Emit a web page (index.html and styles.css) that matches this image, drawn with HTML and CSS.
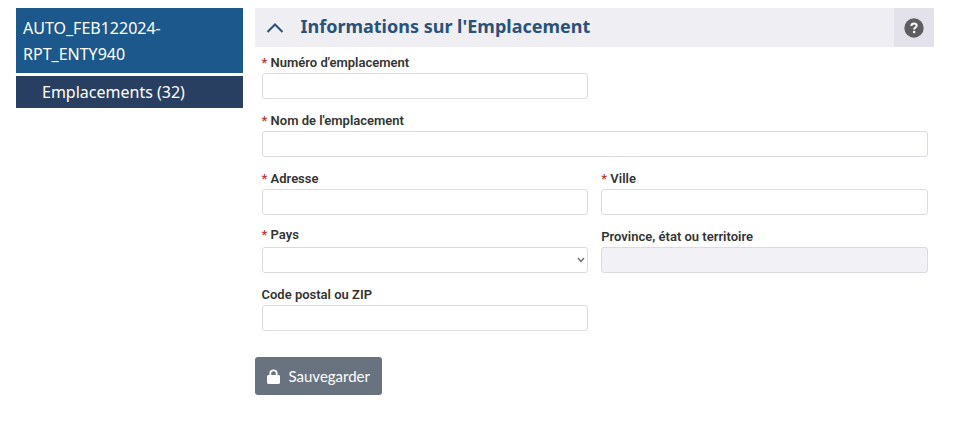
FILE: index.html
```
<!DOCTYPE html>
<html lang="fr">
<head>
    <meta charset="UTF-8">
    <meta name="viewport" content="width=device-width, initial-scale=1.0">
    <title>Informations sur l'Emplacement</title>
    <link rel="stylesheet" href="styles.css">
</head>
<body>
    <div class="page">
        <nav class="sidebar">
            <a href="#" class="sidebar-entity">AUTO_FEB122024-RPT_ENTY940</a>
            <a href="#" class="sidebar-item">Emplacements (32)</a>
        </nav>
        <main class="content">
            <div class="panel-header">
                <button type="button" class="toggle-btn" aria-label="Réduire">
                    <svg width="18" height="12" viewBox="0 0 18 12"><path d="M1.5 10 L9 2.5 L16.5 10" fill="none" stroke="currentColor" stroke-width="2"/></svg>
                </button>
                <h1>Informations sur l'Emplacement</h1>
                <button type="button" class="help-btn" aria-label="Aide">
                    <svg width="20" height="20" viewBox="0 0 20 20">
                        <circle cx="10" cy="10" r="9.7" fill="#5e5e60"/>
                        <path d="M7.3 8 C7.6 4.6 12.8 4.9 12.7 7.8 C12.6 9.6 10.1 9.5 10.1 11.5" fill="none" stroke="#fff" stroke-width="2"/>
                        <circle cx="10.1" cy="14" r="1.3" fill="#fff"/>
                    </svg>
                </button>
            </div>
            <form class="location-form" action="#" method="post">
                <div class="form-row">
                    <div class="form-group">
                        <label for="numero"><span class="required">*</span> Numéro d'emplacement</label>
                        <input type="text" id="numero" name="numero" required>
                    </div>
                </div>
                <div class="form-row">
                    <div class="form-group form-group-wide">
                        <label for="nom"><span class="required">*</span> Nom de l'emplacement</label>
                        <input type="text" id="nom" name="nom" required>
                    </div>
                </div>
                <div class="form-row form-row-address">
                    <div class="form-group">
                        <label for="adresse"><span class="required">*</span> Adresse</label>
                        <input type="text" id="adresse" name="adresse" required>
                    </div>
                    <div class="form-group">
                        <label for="ville"><span class="required">*</span> Ville</label>
                        <input type="text" id="ville" name="ville" required>
                    </div>
                </div>
                <div class="form-row">
                    <div class="form-group form-group-select">
                        <label for="pays"><span class="required">*</span> Pays</label>
                        <div class="select-wrap">
                            <select id="pays" name="pays" required>
                                <option value="" selected></option>
                                <option value="CA">Canada</option>
                                <option value="US">États-Unis</option>
                            </select>
                            <svg class="select-arrow" width="8" height="6" viewBox="0 0 8 6"><path d="M1 1 L4 4.5 L7 1" fill="none" stroke="#666" stroke-width="1.3"/></svg>
                        </div>
                    </div>
                    <div class="form-group">
                        <label for="province">Province, état ou territoire</label>
                        <input type="text" id="province" name="province" disabled>
                    </div>
                </div>
                <div class="form-row">
                    <div class="form-group">
                        <label for="code_postal">Code postal ou ZIP</label>
                        <input type="text" id="code_postal" name="code_postal">
                    </div>
                </div>
                <button type="submit" class="save-btn">
                    <svg width="13" height="15" viewBox="0 0 13 15">
                        <path d="M3.3 7 V4.5 a3.2 3.2 0 0 1 6.4 0 V7" fill="none" stroke="#fff" stroke-width="1.8"/>
                        <rect x="0" y="6" width="13" height="9" rx="1.4" fill="#fff"/>
                    </svg>
                    Sauvegarder
                </button>
            </form>
        </main>
    </div>
</body>
</html>
```
FILE: styles.css
```
* {
    margin: 0;
    padding: 0;
    box-sizing: border-box;
}

body {
    background: #fff;
    font-family: 'Roboto', sans-serif;
    color: #333;
}

.page {
    display: grid;
    grid-template-columns: 1fr 3fr;
    gap: 12px;
    align-items: start;
    padding: 8px 21px 40px 16px;
}

.sidebar {
    display: flex;
    flex-direction: column;
    gap: 3px;
}

.sidebar a {
    font-family: 'Noto Sans', sans-serif;
    font-size: 16px;
    line-height: 26px;
    color: #fff;
    text-decoration: none;
}

.sidebar .sidebar-entity {
    padding: 7px 7px 6px;
    background: #1c588b;
}

.sidebar .sidebar-item {
    padding: 3px 7px 3px 26px;
    background: #293f62;
}

.panel-header {
    display: flex;
    align-items: stretch;
    min-height: 39px;
    background: #efeef3;
    color: #2a5278;
}

.panel-header h1 {
    flex: 1;
    font-family: 'Noto Sans', sans-serif;
    font-size: 18px;
    font-weight: 700;
    line-height: 36px;
}

.toggle-btn,
.help-btn {
    display: flex;
    align-items: center;
    justify-content: center;
    border: none;
    background: transparent;
    color: inherit;
    cursor: pointer;
}

.toggle-btn {
    width: 46px;
    padding-right: 6px;
}

.help-btn {
    width: 40px;
    background: #e3e2ea;
}

.location-form {
    padding-top: 6px;
}

.form-row {
    display: grid;
    grid-template-columns: 1fr 1fr;
    gap: 13px;
    align-items: end;
    margin: 0 6px 12px 7px;
}

.form-row-address {
    margin-bottom: 10px;
}

.form-group-wide {
    grid-column: 1 / -1;
}

.form-group label {
    display: block;
    font-size: 13px;
    font-weight: 600;
    line-height: 20px;
}

.form-group-select label {
    margin-bottom: 2px;
}

.required {
    color: #b5363f;
}

.form-group input,
.form-group select {
    display: block;
    width: 100%;
    height: 26px;
    padding: 0 8px;
    border: 1px solid #dcdce0;
    border-radius: 3px;
    background: #fff;
    font-family: 'Roboto', sans-serif;
    font-size: 13px;
    color: #333;
}

.form-group select {
    appearance: none;
}

.form-group input:disabled {
    background: #f2f2f6;
}

.form-group input:focus,
.form-group select:focus {
    border-color: #1c588b;
    outline: none;
}

.select-wrap {
    position: relative;
}

.select-arrow {
    position: absolute;
    top: 10px;
    right: 3px;
    pointer-events: none;
}

.save-btn {
    display: flex;
    align-items: center;
    gap: 9px;
    margin-top: 26px;
    padding: 9px 12px;
    border: none;
    border-radius: 3px;
    background: #69737f;
    color: #fff;
    font-family: 'Lato', sans-serif;
    font-size: 15px;
    line-height: 20px;
    cursor: pointer;
}

.save-btn:hover {
    background: #59626d;
}
```
